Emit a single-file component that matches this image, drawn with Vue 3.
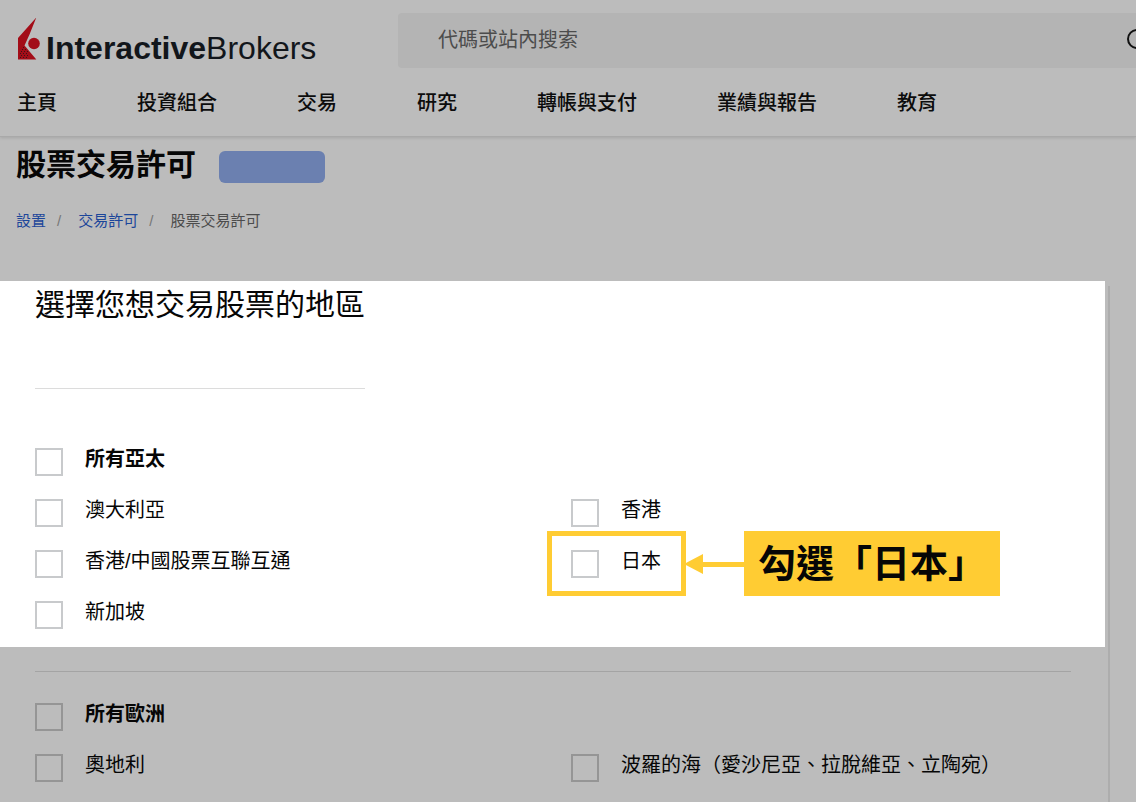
<script setup>
const navItems = ['主頁', '投資組合', '交易', '研究', '轉帳與支付', '業績與報告', '教育']

const asiaRegions = [
  { id: 'au', name: '澳大利亞' },
  { id: 'hk', name: '香港' },
  { id: 'hkcn', name: '香港/中國股票互聯互通' },
  { id: 'jp', name: '日本', callout: '勾選「日本」' },
  { id: 'sg', name: '新加坡' }
]

const europeRegions = [
  { id: 'at', name: '奧地利' },
  { id: 'baltic', name: '波羅的海（愛沙尼亞、拉脫維亞、立陶宛）' }
]
</script>

<template>
  <div class="page">
    <header class="header">
      <div class="top">
        <a class="logo" href="#">
          <svg class="mark" viewBox="0 0 24 44" aria-hidden="true">
            <path d="M19.3 -0.5 L1 20 V41.5 H19.3 L7.5 27.5 L12.5 16.5 Z" fill="#a30d18" />
            <circle cx="17" cy="25.5" r="5.8" fill="#a30d18" />
            <g fill="#3b1418">
              <rect x="6" y="29" width="1" height="1" />
              <rect x="8" y="31" width="1" height="1" />
              <rect x="5" y="31" width="1" height="1" />
              <rect x="4" y="33" width="1" height="1" />
              <rect x="7" y="33" width="1" height="1" />
              <rect x="10" y="33" width="1" height="1" />
              <rect x="3" y="35" width="1" height="1" />
              <rect x="6" y="35" width="1" height="1" />
              <rect x="9" y="35" width="1" height="1" />
              <rect x="4" y="37" width="1" height="1" />
              <rect x="7" y="37" width="1" height="1" />
              <rect x="10" y="37" width="1" height="1" />
              <rect x="3" y="39" width="1" height="1" />
              <rect x="6" y="39" width="1" height="1" />
              <rect x="9" y="39" width="1" height="1" />
            </g>
          </svg>
          <span class="wordmark"><b>Interactive</b>Brokers</span>
        </a>
        <form class="search" @submit.prevent>
          <input type="search" placeholder="代碼或站內搜索" aria-label="代碼或站內搜索" />
          <button type="submit" aria-label="搜索">
            <svg viewBox="0 0 26 26" aria-hidden="true">
              <circle cx="11" cy="11" r="9" fill="none" stroke="#111" stroke-width="2" />
              <path d="M17 17 L25 25" stroke="#111" stroke-width="2" />
            </svg>
          </button>
        </form>
      </div>
      <nav class="nav">
        <a v-for="item in navItems" :key="item" href="#">{{ item }}</a>
      </nav>
    </header>

    <div class="heading">
      <h1>股票交易許可</h1>
      <span class="account"></span>
    </div>

    <nav class="crumbs">
      <a href="#">設置</a>
      <span class="slash">/</span>
      <a href="#">交易許可</a>
      <span class="slash">/</span>
      <span>股票交易許可</span>
    </nav>

    <main class="panel">
      <section class="spotlight">
        <h2>選擇您想交易股票的地區</h2>
        <div class="regions">
          <div class="region all">
            <input id="asia-all" type="checkbox" />
            <label for="asia-all">所有亞太</label>
          </div>
          <div v-for="region in asiaRegions" :key="region.id" class="region">
            <input :id="region.id" type="checkbox" />
            <label :for="region.id">{{ region.name }}</label>
            <div v-if="region.callout" class="callout">
              <span class="frame"></span>
              <svg class="arrow" viewBox="0 0 60 22" aria-hidden="true">
                <path d="M0 11 L19 1 V9 H60 V14 H19 V21 Z" fill="#ffcc33" />
              </svg>
              <strong>{{ region.callout }}</strong>
            </div>
          </div>
        </div>
      </section>

      <section class="europe">
        <div class="regions">
          <div class="region all">
            <input id="europe-all" type="checkbox" />
            <label for="europe-all">所有歐洲</label>
          </div>
          <div v-for="region in europeRegions" :key="region.id" class="region">
            <input :id="region.id" type="checkbox" />
            <label :for="region.id">{{ region.name }}</label>
          </div>
        </div>
      </section>
    </main>
  </div>
</template>

<style>
html,
body {
  background: #bcbcbc;
}

body {
  overflow: hidden;
}
</style>

<style scoped>
.page {
  min-height: 100vh;
  background: #bcbcbc;
  color: #060606;
  font-family: "Liberation Sans", "Noto Sans CJK TC", sans-serif;
  font-size: 20px;
}

.page * {
  box-sizing: border-box;
}

a {
  text-decoration: none;
}

.header {
  padding-top: 13px;
  border-bottom: 1px solid #a9a9a9;
  box-shadow: 0 1px 3px rgba(0, 0, 0, 0.12);
}

.top {
  display: flex;
  overflow: hidden;
}

.logo {
  display: flex;
  flex: 0 0 398px;
  align-items: flex-start;
  padding: 5px 0 0 17px;
  color: #12161b;
}

.mark {
  width: 24px;
  height: 44px;
  margin-right: 5px;
}

.wordmark {
  padding-top: 12px;
  font-size: 32px;
  line-height: 36px;
}

.search {
  display: flex;
  flex: 1;
  align-items: center;
  height: 55px;
  margin-right: -10px;
  border-radius: 4px 0 0 4px;
  background: #b4b4b4;
}

.search input {
  flex: 1;
  min-width: 0;
  padding: 0 40px;
  border: 0;
  outline: 0;
  background: none;
  font: inherit;
}

.search input::placeholder {
  color: #4c4c4c;
  opacity: 1;
}

.search button {
  display: flex;
  padding: 0;
  border: 0;
  background: none;
}

.search button svg {
  width: 26px;
  height: 26px;
  margin-right: -6px;
}

.nav {
  display: flex;
  gap: 80px;
  height: 68px;
  padding: 0 17px;
  line-height: 70px;
}

.nav a {
  flex: none;
  color: #0c0c0c;
  font-weight: 500;
}

.heading {
  display: flex;
  gap: 23px;
  align-items: center;
  padding: 10px 16px 0;
}

h1 {
  margin: 0;
  font-size: 30px;
  font-weight: 700;
  line-height: 34px;
}

.account {
  width: 106px;
  height: 32px;
  margin-top: 4px;
  border-radius: 6px;
  background: #6b80b0;
}

.crumbs {
  display: flex;
  padding: 26px 16px 0;
  color: #4c4c4c;
  font-size: 15px;
  line-height: 24px;
}

.crumbs a {
  color: #1c469a;
}

.slash {
  padding: 0 17px 0 11px;
  color: #777;
}

.panel {
  position: relative;
  margin-top: 48px;
  padding-right: 31px;
}

.panel::after {
  position: absolute;
  top: 5px;
  right: 26px;
  bottom: 0;
  width: 2px;
  background: #adadad;
  content: "";
}

.spotlight {
  padding: 0 34px 18px 35px;
  background: #fff;
}

h2 {
  display: inline-block;
  margin: 0 0 59px;
  padding-bottom: 60px;
  border-bottom: 1px solid #dcdcdc;
  font-size: 30px;
  font-weight: 400;
  line-height: 47px;
  vertical-align: top;
}

.regions {
  display: grid;
  grid-template-columns: 1fr 1fr;
  gap: 23px 36px;
}

.region {
  display: flex;
  position: relative;
  gap: 22px;
  align-items: flex-start;
  height: 28px;
}

.all {
  grid-column: 1 / -1;
  font-weight: 700;
}

.region label {
  line-height: 22px;
  white-space: nowrap;
}

.region input {
  flex: none;
  width: 28px;
  height: 28px;
  margin: 0;
  border: 2px solid #c8cacc;
  appearance: none;
}

.callout {
  display: flex;
  position: absolute;
  top: -19px;
  left: -24px;
  align-items: center;
  height: 65px;
  pointer-events: none;
}

.frame {
  width: 139px;
  height: 65px;
  border: 5px solid #ffcc33;
}

.arrow {
  width: 60px;
  height: 22px;
  margin-left: -2px;
}

.callout strong {
  width: 256px;
  height: 65px;
  padding-left: 14px;
  background: #ffcc33;
  color: #060606;
  font-size: 38px;
  line-height: 67px;
  white-space: nowrap;
}

.europe {
  margin: 24px 34px 0 35px;
  padding: 31px 0 20px;
  border-top: 1px solid #a4a4a4;
}

.europe .region input {
  border-color: #959595;
}
</style>
